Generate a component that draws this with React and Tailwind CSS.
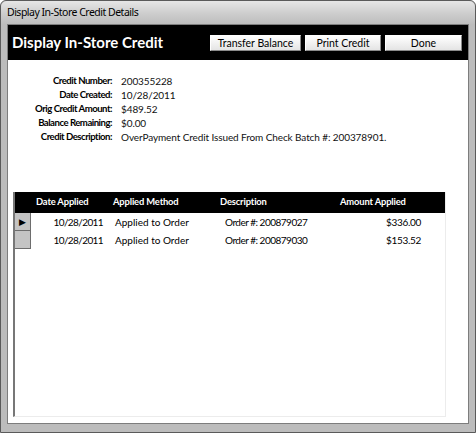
import React from 'react';

const FIELDS = [
  ['Credit Number:', '200355228'],
  ['Date Created:', '10/28/2011'],
  ['Orig Credit Amount:', '$489.52'],
  ['Balance Remaining:', '$0.00'],
  ['Credit Description:', 'OverPayment Credit Issued From Check Batch #: 200378901.'],
];

const ROWS = [
  { date: '10/28/2011', method: 'Applied to Order', desc: 'Order #: 200879027', amt: '$336.00', current: true },
  { date: '10/28/2011', method: 'Applied to Order', desc: 'Order #: 200879030', amt: '$153.52' },
];

function Btn({ children, w }) {
  return (
    <button
      className={`h-[16px] ${w} bg-gradient-to-b from-white to-[#e4e4e4] border border-t-white border-l-white border-r-[#8a8a8a] border-b-[#8a8a8a] text-[10.5px] leading-[14px] text-black`}
    >
      {children}
    </button>
  );
}

export default function App() {
  return (
    <div
      className="w-[476px] h-[433px] bg-[#bcbcbc] border border-[#5a5a5a] rounded-t-[6px] flex flex-col"
      style={{ fontFamily: 'Lato, "Open Sans", sans-serif' }}
    >
      {/* title bar */}
      <div className="h-[23px] shrink-0 flex items-center pl-[6px] rounded-t-[6px] bg-gradient-to-b from-[#e6e6e6] via-[#cfcfcf] to-[#bdbdbd] text-black" style={{ fontFamily: '"Noto Sans", sans-serif' }}>
        <span className="tracking-[-0.5px] text-[10.5px]">Display In-Store Credit Details</span>
      </div>

      <div className="flex-1 mx-[6px] mb-[8px] border border-[#7d7d7d] bg-white flex flex-col">
        {/* header */}
        <div className="h-[35px] shrink-0 bg-black flex items-center pl-[4px] pr-[6px]">
          <div className="text-white font-bold text-[15px] flex-1">Display In-Store Credit</div>
          <div className="flex gap-[4px] mt-[1px]">
            <Btn w="w-[91px]">Transfer Balance</Btn>
            <Btn w="w-[76px]">Print Credit</Btn>
            <Btn w="w-[77px]">Done</Btn>
          </div>
        </div>

        {/* fields */}
        <div className="pt-[14px] flex flex-col">
          {FIELDS.map(([k, v]) => (
            <div key={k} className="flex h-[14px] items-center leading-[14px]">
              <div className="w-[104px] text-right font-bold text-[9.6px] tracking-[-0.5px]">{k}</div>
              <div className="pl-[9px] text-[#111] text-[10px] tracking-[-0.1px]">{v}</div>
            </div>
          ))}
        </div>

        {/* subform */}
        <div className="mt-[48px] ml-[5px] mr-[22px] mb-[6px] flex-1 flex flex-col border-l-[2px] border-l-[#777] border-r border-r-[#ececec] border-b border-b-[#ececec]">
          <div className="h-[21px] shrink-0 bg-black text-white font-bold text-[9.4px] tracking-[-0.15px] flex items-center">
            <div className="w-[21px]" />
            <div className="w-[77px]">Date Applied</div>
            <div className="w-[107px]">Applied Method</div>
            <div className="w-[120px]">Description</div>
            <div>Amount Applied</div>
          </div>
          {ROWS.map((r, i) => (
            <div key={i} className="flex h-[18px] items-center text-[10px]">
              <div className="w-[16px] h-[18px] bg-[#c4c4c4] border-r border-b border-[#6d6d6d] flex items-center justify-center">
                {r.current && <span className="text-[9px] leading-none text-black">▶</span>}
              </div>
              <div className="w-[72px] text-right tracking-[-0.6px]">{r.date}</div>
              <div className="w-[111px] pl-[12px]">{r.method}</div>
              <div className="w-[110px] pl-[11px] tracking-[-0.5px]">{r.desc}</div>
              <div className="w-[97px] text-right tracking-[-0.3px]">{r.amt}</div>
            </div>
          ))}
        </div>
      </div>
    </div>
  );
}
